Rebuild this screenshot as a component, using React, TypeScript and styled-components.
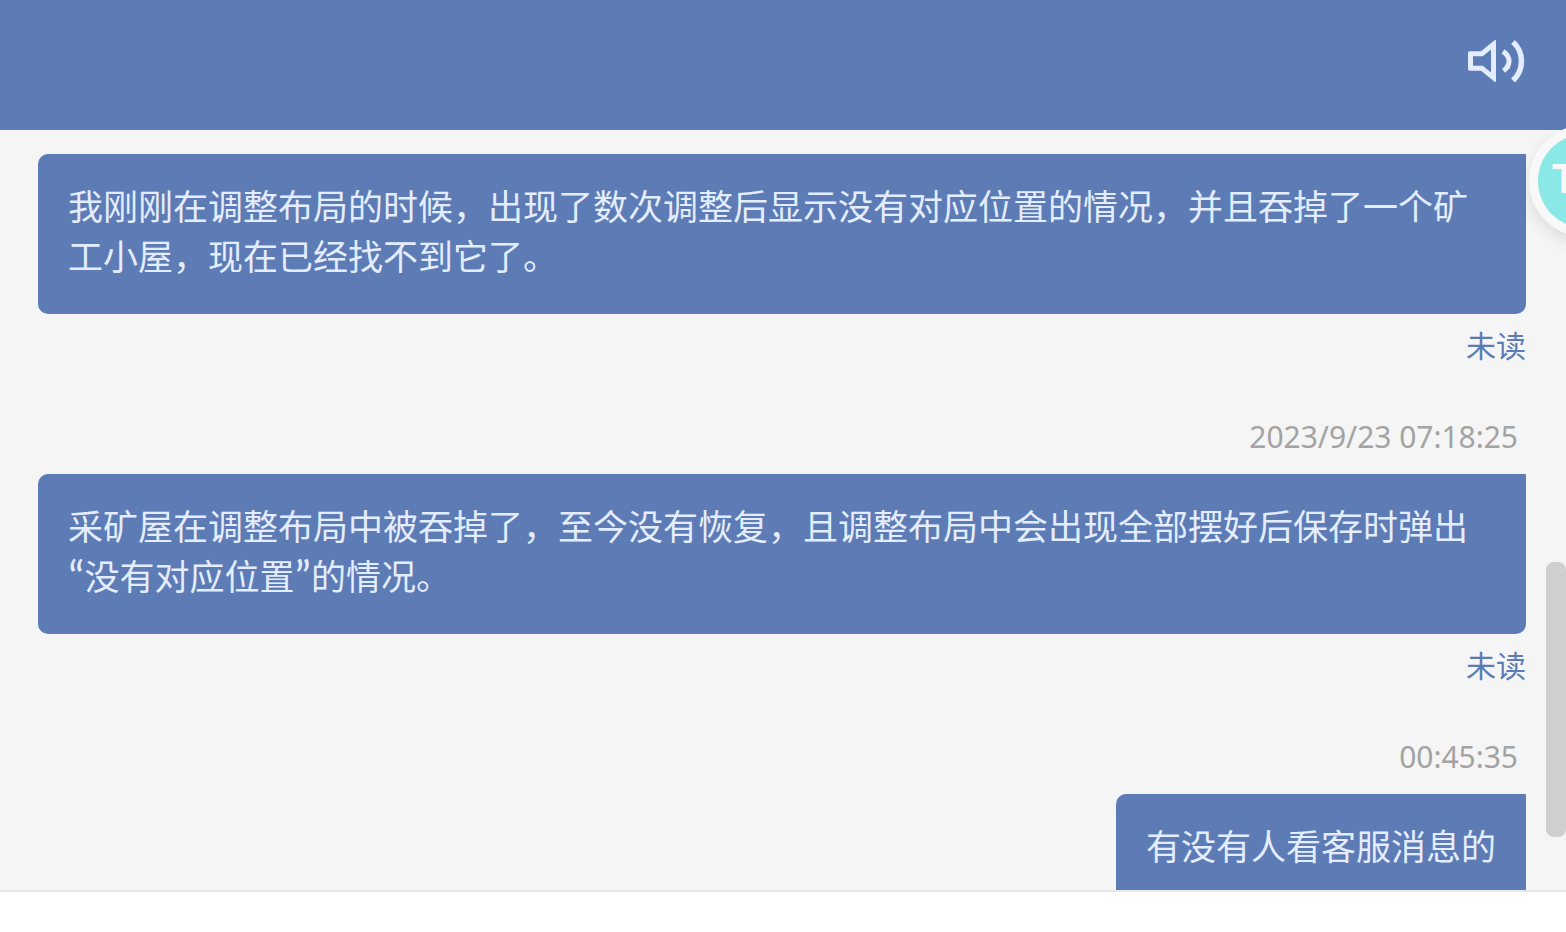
import React from "react";
import styled, { createGlobalStyle } from "styled-components";

interface ChatMessage {
  id: number;
  time?: string;
  text: React.ReactNode;
  status?: string;
}

function SpeakerIcon() {
  return (
    <svg width="60" height="46" viewBox="0 0 60 46" fill="none">
      <path
        d="M4 13.3H15L28.3 2.5Q30 1.5 30 3V43Q30 44.8 28.3 43.5L15 32.7H4Q2 32.7 2 30.7V15.3Q2 13.3 4 13.3ZM7 18.3V27.7H16.8L25 34.5V11.5L16.8 18.3Z"
        fill="#e3edff"
        fillRule="evenodd"
      />
      <path
        d="M37 13.3C45 18.5 45 27.5 37.5 32.7"
        stroke="#e3edff"
        strokeWidth="5"
      />
      <path
        d="M47 4C58.3 14 58.3 32 47 42.5"
        stroke="#e3edff"
        strokeWidth="5.5"
      />
    </svg>
  );
}

export default function App() {
  return (
    <>
      <GlobalStyle />
      <Page>
        <Header>
          <SoundButton aria-label="sound">
            <SpeakerIcon />
          </SoundButton>
        </Header>
        <Body>
          <MessageList>
            {messages.map((message) => (
              <MessageItem key={message.id}>
                {message.time && <Time>{message.time}</Time>}
                <Bubble>{message.text}</Bubble>
                {message.status && <Status>{message.status}</Status>}
              </MessageItem>
            ))}
          </MessageList>
          <ScrollTrack>
            <ScrollThumb />
          </ScrollTrack>
        </Body>
        <Footer />
        <FloatingBall>
          <BallInner>T</BallInner>
        </FloatingBall>
      </Page>
    </>
  );
}

const GlobalStyle = createGlobalStyle`
  * {
    box-sizing: border-box;
  }

  body {
    margin: 0;
    overflow: hidden;
    font-family: "Noto Sans", "Noto Sans CJK SC", sans-serif;
  }
`;

const Page = styled.div`
  position: relative;
  display: flex;
  flex-direction: column;
  width: 1566px;
  height: 932px;
  overflow: hidden;
  background: #f5f5f5;
`;

const Header = styled.header`
  display: flex;
  flex: none;
  align-items: flex-start;
  justify-content: flex-end;
  height: 130px;
  padding: 38px 40px 0 0;
  background: #5d7bb5;
`;

const SoundButton = styled.button`
  display: flex;
  padding: 0;
  border: none;
  background: none;
  cursor: pointer;
`;

const Body = styled.main`
  display: flex;
  flex: none;
  height: 760px;
  overflow: hidden;
`;

const MessageList = styled.div`
  display: flex;
  flex: 1;
  flex-direction: column;
  gap: 38px;
  padding: 24px 20px 0 38px;
`;

const MessageItem = styled.div`
  display: flex;
  flex: none;
  flex-direction: column;
  align-items: flex-end;
`;

const Time = styled.div`
  height: 56px;
  padding: 0 8px 18px 0;
  font-size: 30px;
  line-height: 38px;
  letter-spacing: -0.03px;
  color: #a3a3a3;
`;

const Bubble = styled.div`
  padding: 28px 30px 32px;
  border-radius: 10px 0 10px 10px;
  background: #5d7bb5;
  color: #e3edff;
  font-size: 35px;
  line-height: 50px;
`;

const Quoted = styled.span`
  white-space: nowrap;
`;

const Quote = styled.span`
  display: inline-block;
  width: 16.5px;
  height: 50px;
  font-family: Lato, sans-serif;
  font-size: 44px;
  line-height: 48px;
  text-align: center;
  vertical-align: top;
`;

const Status = styled.div`
  height: 66px;
  padding-top: 11px;
  font-size: 30px;
  line-height: 42px;
  color: #5d7bb5;
`;

const ScrollTrack = styled.div`
  flex: none;
  width: 20px;
  padding-top: 432px;
`;

const ScrollThumb = styled.div`
  height: 275px;
  border-radius: 8px;
  background: #cfcfcf;
`;

const Footer = styled.footer`
  flex: 1;
  border-top: 2px solid #e9e9e9;
  background: #fff;
`;

const FloatingBall = styled.div`
  position: absolute;
  top: 125px;
  left: 1529px;
  display: flex;
  align-items: center;
  justify-content: center;
  width: 112px;
  height: 112px;
  border-radius: 50%;
  background: #f8f8f8;
  box-shadow: 0 6px 16px rgba(0, 0, 0, 0.1);
`;

const BallInner = styled.div`
  width: 94px;
  height: 94px;
  padding: 25px 0 0 13px;
  border-radius: 50%;
  background: #8ae8e6;
  color: #f8f8f8;
  font-family: Inter, sans-serif;
  font-size: 40px;
  font-weight: 700;
  line-height: 40px;
`;

const messages: ChatMessage[] = [
  {
    id: 1,
    text: "我刚刚在调整布局的时候，出现了数次调整后显示没有对应位置的情况，并且吞掉了一个矿工小屋，现在已经找不到它了。",
    status: "未读",
  },
  {
    id: 2,
    time: "2023/9/23 07:18:25",
    text: (
      <>
        采矿屋在调整布局中被吞掉了，至今没有恢复，且调整布局中会出现全部摆好后保存时弹出
        <wbr />
        <Quoted>
          <Quote>“</Quote>没有对应位置<Quote>”</Quote>
        </Quoted>
        的情况。
      </>
    ),
    status: "未读",
  },
  {
    id: 3,
    time: "00:45:35",
    text: "有没有人看客服消息的",
  },
];
